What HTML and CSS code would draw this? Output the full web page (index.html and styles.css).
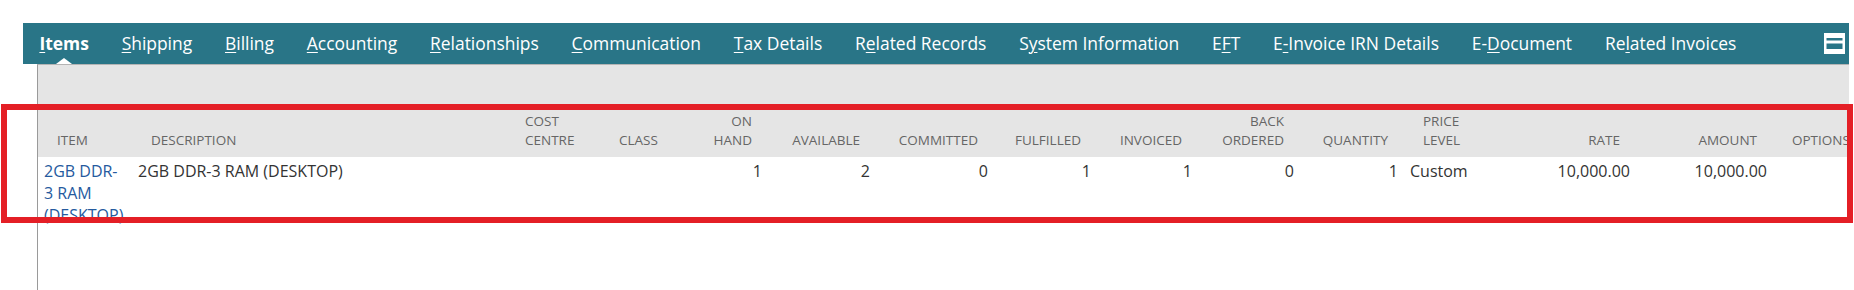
FILE: index.html
```html
<!DOCTYPE html>
<html lang="en">
<head>
<meta charset="utf-8">
<title>Items</title>
<link rel="stylesheet" href="styles.css">
</head>
<body>
<div class="wrap">
  <nav class="tabs">
    <a class="tab active" href="#"><u>I</u>tems</a>
    <a class="tab" href="#"><u>S</u>hipping</a>
    <a class="tab" href="#"><u>B</u>illing</a>
    <a class="tab" href="#"><u>A</u>ccounting</a>
    <a class="tab" href="#"><u>R</u>elationships</a>
    <a class="tab" href="#"><u>C</u>ommunication</a>
    <a class="tab" href="#"><u>T</u>ax Details</a>
    <a class="tab" href="#">R<u>e</u>lated Records</a>
    <a class="tab" href="#">S<u>y</u>stem Information</a>
    <a class="tab" href="#">E<u>F</u>T</a>
    <a class="tab" href="#">E<u>-</u>Invoice IRN Details</a>
    <a class="tab" href="#">E-<u>D</u>ocument</a>
    <a class="tab" href="#">Re<u>l</u>ated Invoices</a>
    <span class="view-toggle" aria-label="Toggle view">
      <svg width="21" height="21" viewBox="0 0 21 21">
        <rect x="0" y="0" width="21" height="21" fill="#ffffff"/>
        <rect x="2.5" y="5" width="16" height="2.5" fill="#297587"/>
        <rect x="2.5" y="10.5" width="16" height="5.5" fill="#297587"/>
      </svg>
    </span>
  </nav>
  <section class="panel">
    <div class="toolbar"></div>
    <table class="items">
      <colgroup>
        <col class="c-item"><col class="c-desc"><col class="c-cost"><col class="c-class">
        <col class="c-onhand"><col class="c-avail"><col class="c-comm"><col class="c-ful">
        <col class="c-inv"><col class="c-back"><col class="c-qty"><col class="c-price">
        <col class="c-rate"><col class="c-amt"><col class="c-opt">
      </colgroup>
      <thead>
        <tr>
          <th class="l">ITEM</th>
          <th class="l">DESCRIPTION</th>
          <th class="l">COST CENTRE</th>
          <th class="l">CLASS</th>
          <th class="r">ON HAND</th>
          <th class="r">AVAILABLE</th>
          <th class="r">COMMITTED</th>
          <th class="r">FULFILLED</th>
          <th class="r">INVOICED</th>
          <th class="r">BACK ORDERED</th>
          <th class="r">QUANTITY</th>
          <th class="l">PRICE LEVEL</th>
          <th class="r">RATE</th>
          <th class="r">AMOUNT</th>
          <th class="l">OPTIONS</th>
        </tr>
      </thead>
      <tbody>
        <tr>
          <td class="item"><a href="#">2GB DDR-3 RAM (DESKTOP)</a></td>
          <td>2GB DDR-3 RAM (DESKTOP)</td>
          <td></td>
          <td></td>
          <td class="r">1</td>
          <td class="r">2</td>
          <td class="r">0</td>
          <td class="r">1</td>
          <td class="r">1</td>
          <td class="r">0</td>
          <td class="r">1</td>
          <td>Custom</td>
          <td class="r">10,000.00</td>
          <td class="r">10,000.00</td>
          <td></td>
        </tr>
      </tbody>
    </table>
  </section>
</div>
<div class="annot"></div>
</body>
</html>
```
FILE: styles.css
```css
html, body {
  margin: 0;
  padding: 0;
  background: #ffffff;
}
body {
  font-family: "Open Sans", "Liberation Sans", sans-serif;
  height: 290px;
  overflow: hidden;
  position: relative;
}
.wrap {
  box-sizing: border-box;
  height: 100%;
  padding: 23px 5px 0 23px;
  display: flex;
  flex-direction: column;
}
.tabs {
  flex: none;
  display: flex;
  align-items: center;
  height: 41px;
  background: #297587;
}
.tab {
  position: relative;
  padding: 0 16.4px;
  color: #ffffff;
  font-size: 17.45px;
  line-height: 41px;
  text-decoration: none;
  white-space: nowrap;
}
.tab u {
  text-decoration-thickness: 1px;
  text-underline-offset: 2px;
}
.tab.active {
  font-weight: 700;
}
.tab.active::after {
  content: "";
  position: absolute;
  left: 50%;
  bottom: 0;
  margin-left: -8px;
  border-left: 8px solid transparent;
  border-right: 8px solid transparent;
  border-bottom: 6px solid #ffffff;
}
.view-toggle {
  margin-left: auto;
  margin-right: 4px;
  display: flex;
  width: 21px;
  height: 21px;
}
.panel {
  flex: 1;
  margin-left: 14px;
  border-left: 1px solid #9a9a9a;
  border-top: 1px solid #b4b4b4;
  overflow: hidden;
  background: #ffffff;
}
.toolbar {
  height: 40px;
  background: #e5e5e5;
}
.items {
  table-layout: fixed;
  width: 1835px;
  border-collapse: collapse;
}
.c-item { width: 94px; }
.c-desc { width: 374px; }
.c-cost { width: 94px; }
.c-class { width: 90px; }
.c-onhand { width: 78px; }
.c-avail { width: 108px; }
.c-comm { width: 118px; }
.c-ful { width: 103px; }
.c-inv { width: 101px; }
.c-back { width: 102px; }
.c-qty { width: 104px; }
.c-price { width: 96px; }
.c-rate { width: 136px; }
.c-amt { width: 137px; }
.c-opt { width: 100px; }

.items thead tr {
  height: 52px;
}
.items th {
  background: #e5e5e5;
  color: #666666;
  font-size: 13.5px;
  font-weight: 400;
  line-height: 19px;
  vertical-align: bottom;
  white-space: normal;
}
.items th.l {
  text-align: left;
  padding: 0 6px 7px 19px;
}
.items th.r {
  text-align: right;
  padding: 0 16px 7px 6px;
}
.items td {
  padding: 3px 6px 0 6px;
  font-size: 16px;
  line-height: 22px;
  color: #333333;
  vertical-align: top;
  text-align: left;
}
.items td.r {
  text-align: right;
}
.items td.item {
  padding-right: 7px;
}
.items td.item a {
  color: #255a9e;
  text-decoration: none;
}
.annot {
  position: absolute;
  left: 1px;
  top: 104px;
  width: 1852px;
  height: 119px;
  box-sizing: border-box;
  border: 6px solid #e41f26;
  pointer-events: none;
}
```
